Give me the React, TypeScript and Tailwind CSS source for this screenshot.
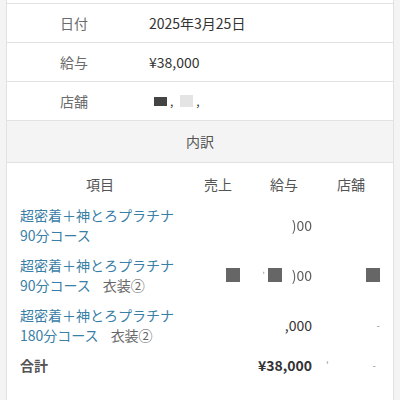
import React from 'react';

const INFO = [
  { label: '日付', value: <span>2025年3月25日</span> },
  { label: '給与', value: <span>¥38,000</span> },
  {
    label: '店舗',
    value: (
      <span className="flex items-center gap-[3px] pl-[5px]">
        <span className="inline-block w-[13px] h-[9px] bg-[#444] blur-[0.5px]" />
        <span className="text-[12px] leading-none">,</span>
        <span className="inline-block w-[13px] h-[12px] bg-[#e4e4e4] ml-[4px] blur-[0.5px]" />
        <span className="text-[12px] leading-none">,</span>
      </span>
    ),
  },
];

const Box = () => <span className="inline-block w-[14px] h-[14px] bg-[#666]" />;

export default function App() {
  return (
    <div
      className="h-[400px] overflow-hidden bg-[#f4f4f4] px-[6px]"
      style={{ fontFamily: '"Noto Sans CJK JP", "Noto Sans", sans-serif' }}
    >
      <div className="h-full bg-white border-x border-[#e2e2e2]">
        <div className="h-[4px] border-b border-[#e2e2e2]" />

        {/* 基本情報 */}
        {INFO.map((row) => (
          <div
            key={row.label}
            className="flex items-center h-[39px] border-b border-[#e2e2e2] text-[14px]"
          >
            <div className="w-[142px] pl-[53px] text-[#6b6b6b]">{row.label}</div>
            <div className="text-[#333]">{row.value}</div>
          </div>
        ))}

        {/* 内訳 */}
        <div className="h-[42px] flex items-center justify-center bg-[#f4f4f4] border-b border-[#e2e2e2] text-[14px] text-[#555]">
          内訳
        </div>

        <div className="pl-[13px] text-[14px] leading-[20px]">
          <div className="grid grid-cols-[160px_76px_56px_78px] h-[42px] items-center text-[#555] text-center">
            <div>項目</div>
            <div>売上</div>
            <div>給与</div>
            <div>店舗</div>
          </div>

          <div className="flex flex-col gap-[10px]">
            <div className="grid grid-cols-[160px_76px_56px_78px] items-center h-[40px]">
              <div className="text-[#3a80a6]">
                超密着＋神とろプラチナ
                <br />
                90分コース
              </div>
              <div />
              <div className="text-right text-[#333]">
                <span className="opacity-80">)00</span>
              </div>
              <div />
            </div>

            <div className="grid grid-cols-[160px_76px_56px_78px] items-center h-[40px]">
              <div className="text-[#3a80a6]">
                超密着＋神とろプラチナ
                <br />
                90分コース<span className="ml-[12px] text-[#666]">衣装②</span>
              </div>
              <div className="pl-[46px] flex items-center">
                <Box />
              </div>
              <div className="flex items-center justify-end text-[#333]">
                <span className="text-[8px] text-[#888] mr-[3px]">'</span>
                <Box />
                <span className="opacity-80 ml-[10px]">)00</span>
              </div>
              <div className="flex justify-end pr-[10px]">
                <Box />
              </div>
            </div>

            <div className="grid grid-cols-[160px_76px_56px_78px] items-center h-[40px]">
              <div className="text-[#3a80a6]">
                超密着＋神とろプラチナ
                <br />
                180分コース<span className="ml-[12px] text-[#666]">衣装②</span>
              </div>
              <div />
              <div className="text-right text-[#333]">,000</div>
              <div className="text-right pr-[10px] text-[#999] text-[10px]">-</div>
            </div>

            <div className="grid grid-cols-[160px_76px_56px_78px] items-center h-[20px]">
              <div className="text-[#555] font-semibold">合計</div>
              <div />
              <div className="text-right text-[#333] font-bold whitespace-nowrap -ml-[20px]">
                ¥38,000
              </div>
              <div className="flex justify-between px-[14px] text-[#999] text-[10px]">
                <span>'</span>
                <span>-</span>
              </div>
            </div>
          </div>
        </div>
      </div>
    </div>
  );
}
